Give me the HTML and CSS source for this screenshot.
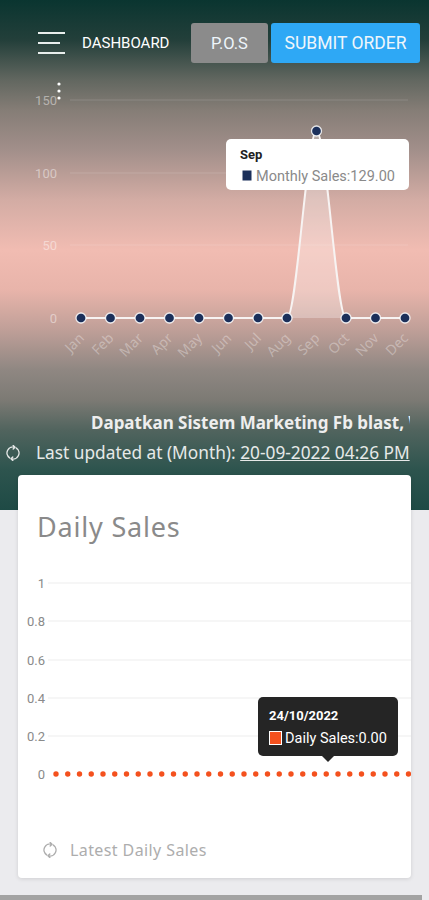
FILE: index.html
```html
<!DOCTYPE html>
<html lang="en">
  <head>
    <meta charset="UTF-8" />
    <meta name="viewport" content="width=device-width, initial-scale=1.0" />
    <title>Dashboard</title>
    <link rel="stylesheet" href="styles.css">
  </head>
  <body>
    <div class="hero">
      <div class="nav">
        <div class="burger"><span></span><span class="short"></span><span></span></div>
        <span class="title">DASHBOARD</span>
        <button class="btn btn-pos">P.O.S</button>
        <button class="btn btn-submit">SUBMIT ORDER</button>
      </div>

      <svg class="chart" width="429" height="340" viewBox="0 63 429 340">
        <g class="grid">
          <line x1="70" y1="100" x2="408" y2="100" />
          <line x1="70" y1="173" x2="408" y2="173" />
          <line x1="70" y1="245" x2="408" y2="245" />
        </g>
        <g class="ylabels">
          <text x="57" y="105">150</text>
          <text x="57" y="178">100</text>
          <text x="57" y="250">50</text>
          <text x="57" y="323">0</text>
        </g>
        <g fill="#fff">
          <circle cx="59" cy="84" r="1.6" />
          <circle cx="59" cy="91" r="1.6" />
          <circle cx="59" cy="98" r="1.6" />
        </g>
        <path class="area" d="M287 318 C296.8 318 306.8 131 316.5 131 C326.3 131 336.2 318 346 318 Z" />
        <path class="line" d="M81 318 H287 C296.8 318 306.8 131 316.5 131 C326.3 131 336.2 318 346 318 H405" />
        <g class="pts">
          <circle cx="81" cy="318" r="5" />
          <circle cx="110.5" cy="318" r="5" />
          <circle cx="140" cy="318" r="5" />
          <circle cx="169.5" cy="318" r="5" />
          <circle cx="199" cy="318" r="5" />
          <circle cx="228.5" cy="318" r="5" />
          <circle cx="258" cy="318" r="5" />
          <circle cx="287" cy="318" r="5" />
          <circle cx="316.5" cy="131" r="5" />
          <circle cx="346" cy="318" r="5" />
          <circle cx="375.5" cy="318" r="5" />
          <circle cx="405" cy="318" r="5" />
        </g>
        <g class="xlabels">
          <text transform="translate(85 339) rotate(-45)">Jan</text>
          <text transform="translate(114.5 339) rotate(-45)">Feb</text>
          <text transform="translate(144 339) rotate(-45)">Mar</text>
          <text transform="translate(173.5 339) rotate(-45)">Apr</text>
          <text transform="translate(203 339) rotate(-45)">May</text>
          <text transform="translate(232.5 339) rotate(-45)">Jun</text>
          <text transform="translate(262 339) rotate(-45)">Jul</text>
          <text transform="translate(291 339) rotate(-45)">Aug</text>
          <text transform="translate(320.5 339) rotate(-45)">Sep</text>
          <text transform="translate(350 339) rotate(-45)">Oct</text>
          <text transform="translate(379.5 339) rotate(-45)">Nov</text>
          <text transform="translate(409 339) rotate(-45)">Dec</text>
        </g>
        <g class="tip-light">
          <rect x="226" y="139" width="183" height="51" rx="5" />
          <text class="tip-title" x="240" y="159">Sep</text>
          <rect class="swatch" x="242" y="170" width="10" height="11" />
          <text class="tip-text" x="256" y="181">Monthly Sales:129.00</text>
        </g>
      </svg>

      <div class="marquee">Dapatkan Sistem Marketing Fb blast, W</div>
      <div class="updated">
        <svg class="sync" width="16" height="16" viewBox="0 0 16 16">
          <path d="M10 2.3 A6 6 0 0 0 4.6 12.9 M8.2 0.6 L10 2.3 L8.2 4.1 M6 13.7 A6 6 0 0 0 11.4 3.1 M7.8 15.4 L6 13.7 L7.8 11.9" />
        </svg>
        <span>Last updated at (Month): <u>20-09-2022 04:26 PM</u></span>
      </div>
    </div>

    <div class="card">
      <h2 class="card-title">Daily Sales</h2>
      <svg class="chart" width="393" height="257" viewBox="18 543 393 257">
        <g class="dgrid">
          <line x1="48" y1="583" x2="411" y2="583" />
          <line x1="48" y1="621" x2="411" y2="621" />
          <line x1="48" y1="660" x2="411" y2="660" />
          <line x1="48" y1="698" x2="411" y2="698" />
          <line x1="48" y1="736" x2="411" y2="736" />
        </g>
        <g class="dlabels">
          <text x="45" y="588">1</text>
          <text x="45" y="626">0.8</text>
          <text x="45" y="665">0.6</text>
          <text x="45" y="703">0.4</text>
          <text x="45" y="741">0.2</text>
          <text x="45" y="779">0</text>
        </g>
        <line class="dots" x1="56" y1="774" x2="412" y2="774" />
        <g class="tip-dark">
          <rect x="258" y="697" width="140" height="59" rx="5" />
          <path d="M322 756 L328 762 L334 756 Z" />
          <text class="tip-title" x="269" y="720">24/10/2022</text>
          <rect class="swatch" x="269.5" y="731.5" width="12" height="13" />
          <text class="tip-text" x="285" y="743">Daily Sales:0.00</text>
        </g>
      </svg>
      <div class="card-foot">
        <svg class="sync" width="16" height="16" viewBox="0 0 16 16">
          <path d="M10 2.3 A6 6 0 0 0 4.6 12.9 M8.2 0.6 L10 2.3 L8.2 4.1 M6 13.7 A6 6 0 0 0 11.4 3.1 M7.8 15.4 L6 13.7 L7.8 11.9" />
        </svg>
        <span>Latest Daily Sales</span>
      </div>
    </div>
    <div class="next"></div>
  </body>
</html>
```

FILE: styles.css
```css
* {
  margin: 0;
  padding: 0;
  box-sizing: border-box;
}
body {
  font-family: "Noto Sans", Roboto, sans-serif;
  background: #ebebee;
  overflow: hidden;
}
.hero {
  height: 510px;
  padding-top: 23px;
  background: linear-gradient(
    to bottom,
    #0a3530 0,
    #233f3a 40px,
    #626760 80px,
    #857d76 110px,
    #a28f8a 150px,
    #d3aca4 200px,
    #f1bcb2 250px,
    #e8b4aa 290px,
    #bf9f98 330px,
    #8f8782 370px,
    #7c7a74 400px,
    #51645e 430px,
    #2d544e 470px,
    #1e4a45 510px
  );
  color: #fff;
}
.nav {
  display: flex;
  align-items: center;
  height: 40px;
  padding-left: 38px;
}
.burger {
  display: flex;
  flex-direction: column;
  gap: 8px;
  width: 27px;
}
.burger span {
  display: block;
  height: 2px;
  background: #e8eeec;
}
.burger .short {
  width: 22px;
}
.title {
  width: 88px;
  margin-left: 17px;
  font-family: Roboto, sans-serif;
  font-size: 15px;
  white-space: nowrap;
  color: #fff;
}
.btn {
  height: 40px;
  border: unset;
  outline: unset;
  border-radius: 3px;
  color: #eef6fb;
  font-family: Roboto, sans-serif;
  font-size: 16.5px;
}
.btn-pos {
  margin-left: 21px;
  width: 77px;
  background: #8b8b8b;
}
.btn-submit {
  margin-left: 3px;
  width: 149px;
  font-size: 17.5px;
  background: #2ea8f5;
}
.chart {
  display: block;
}
.grid line {
  stroke: rgba(255, 255, 255, 0.14);
  stroke-width: 1;
}
.ylabels text {
  font-family: Roboto, sans-serif;
  font-size: 13px;
  fill: rgba(255, 255, 255, 0.45);
  text-anchor: end;
}
.area {
  fill: rgba(255, 255, 255, 0.28);
}
.line {
  fill: none;
  stroke: #f7f3f2;
  stroke-width: 2;
}
.pts circle {
  fill: #1b2f5a;
  stroke: rgba(255, 255, 255, 0.85);
  stroke-width: 1.3;
}
.xlabels text {
  font-size: 14px;
  fill: rgba(255, 255, 255, 0.33);
  text-anchor: end;
}
.tip-light rect {
  fill: #fff;
}
.tip-light .swatch {
  fill: #1b2f5a;
  stroke: #fff;
}
.tip-title {
  font-family: Roboto, sans-serif;
  font-size: 13px;
  font-weight: bold;
}
.tip-light .tip-title {
  fill: #222;
}
.tip-text {
  font-family: Roboto, sans-serif;
  font-size: 14.5px;
}
.tip-light .tip-text {
  fill: #8a8a8a;
}
.marquee {
  margin-top: 10px;
  margin-right: 19px;
  padding-left: 91px;
  font-weight: bold;
  font-size: 17px;
  line-height: 20px;
  color: #eeeeee;
  white-space: nowrap;
  overflow: hidden;
}
.updated {
  display: flex;
  align-items: center;
  margin-top: 10px;
  padding-left: 5px;
  font-size: 17.3px;
  line-height: 20px;
  color: #e6e9e8;
  white-space: nowrap;
}
.updated .sync {
  margin-right: 15px;
}
.sync path {
  fill: none;
  stroke: currentColor;
  stroke-width: 1.4;
  stroke-linecap: round;
  stroke-linejoin: round;
}
.card {
  width: 393px;
  height: 403px;
  margin: -35px 0 0 18px;
  padding-top: 36px;
  background: #fff;
  border-radius: 4px;
  box-shadow: 0 1px 4px rgba(0, 0, 0, 0.12);
}
.card-title {
  padding-left: 19px;
  font-size: 27px;
  font-weight: 400;
  letter-spacing: 0.8px;
  line-height: 32px;
  color: #8a8a8a;
}
.dgrid line {
  stroke: #ededed;
  stroke-width: 1.2;
}
.dlabels text {
  font-family: Roboto, sans-serif;
  font-size: 13px;
  fill: #8a8a8a;
  text-anchor: end;
}
.dots {
  stroke: #f4511e;
  stroke-width: 5.4;
  stroke-linecap: round;
  stroke-dasharray: 0 11.75;
}
.tip-dark rect,
.tip-dark path {
  fill: #252525;
}
.tip-dark .swatch {
  fill: #f4511e;
  stroke: #fff;
}
.tip-dark text {
  fill: #fff;
}
.card-foot {
  display: flex;
  align-items: center;
  margin-top: 39px;
  padding-left: 24px;
  font-size: 16px;
  letter-spacing: 0.4px;
  line-height: 22px;
  color: #adadad;
}
.card-foot .sync {
  margin-right: 12px;
}
.next {
  height: 10px;
  margin: 17px 7px 0 0;
  background: #a3a3a3;
}
```
